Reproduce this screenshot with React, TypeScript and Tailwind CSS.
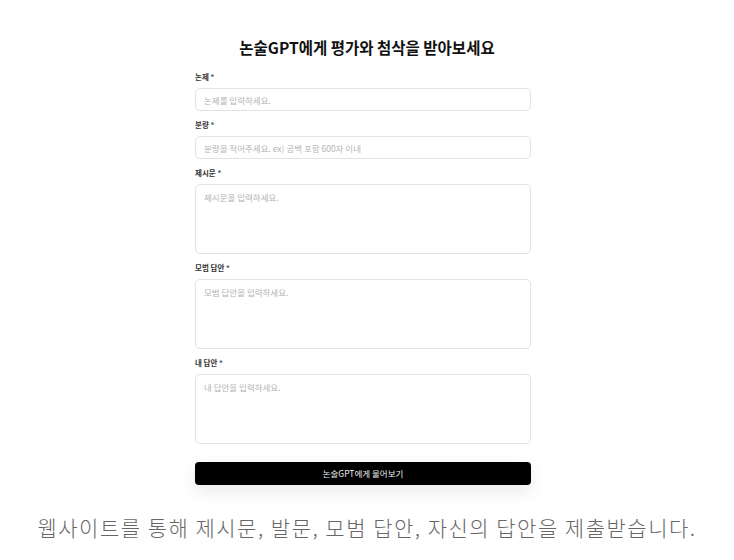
const fields = [
  { label: "논제", placeholder: "논제를 입력하세요.", multi: false },
  { label: "분량", placeholder: "분량을 적어주세요. ex) 공백 포함 600자 이내", multi: false },
  { label: "제시문", placeholder: "제시문을 입력하세요.", multi: true },
  { label: "모범 답안", placeholder: "모범 답안을 입력하세요.", multi: true },
  { label: "내 답안", placeholder: "내 답안을 입력하세요.", multi: true },
];

export default function App() {
  return (
    <div className="w-[734px] h-[560px] bg-white flex flex-col items-center font-['Noto_Sans_CJK_KR',sans-serif]">
      <h1 className="mt-[36px] text-[15.5px] leading-[22px] font-bold text-[#111]">
        논술GPT에게 평가와 첨삭을 받아보세요
      </h1>

      <form className="mt-[14px] w-[336px] ml-[-8px] flex flex-col">
        {fields.map((f, i) => (
          <div key={i} className={i === 0 ? "flex flex-col" : "flex flex-col mt-[9px]"}>
            <label className="h-[10px] text-[7.5px] leading-[10px] font-bold text-[#333]">
              {f.label} <span className="text-[#555]">*</span>
            </label>
            {f.multi ? (
              <textarea
                placeholder={f.placeholder}
                className="mt-[6px] h-[70px] resize-none rounded-[5px] border border-[#e2e2e2] px-[8px] py-[6px] text-[8.5px] leading-[12px] placeholder:text-[#b3b3b3] outline-none"
              />
            ) : (
              <input
                placeholder={f.placeholder}
                className="mt-[6px] h-[23px] rounded-[5px] border border-[#e2e2e2] px-[8px] text-[8.5px] placeholder:text-[#b3b3b3] outline-none"
              />
            )}
          </div>
        ))}

        <button
          type="button"
          className="mt-[18px] h-[23px] rounded-[4px] bg-black text-[#eee] text-[8.5px] shadow-[0_6px_18px_rgba(0,0,0,0.09)]"
        >
          논술GPT에게 물어보기
        </button>
      </form>

      <p className="mt-[28px] text-[21px] leading-[28px] font-light tracking-[1.5px] text-[#666]">
        웹사이트를 통해 제시문, 발문, 모범 답안, 자신의 답안을 제출받습니다.
      </p>
    </div>
  );
}
